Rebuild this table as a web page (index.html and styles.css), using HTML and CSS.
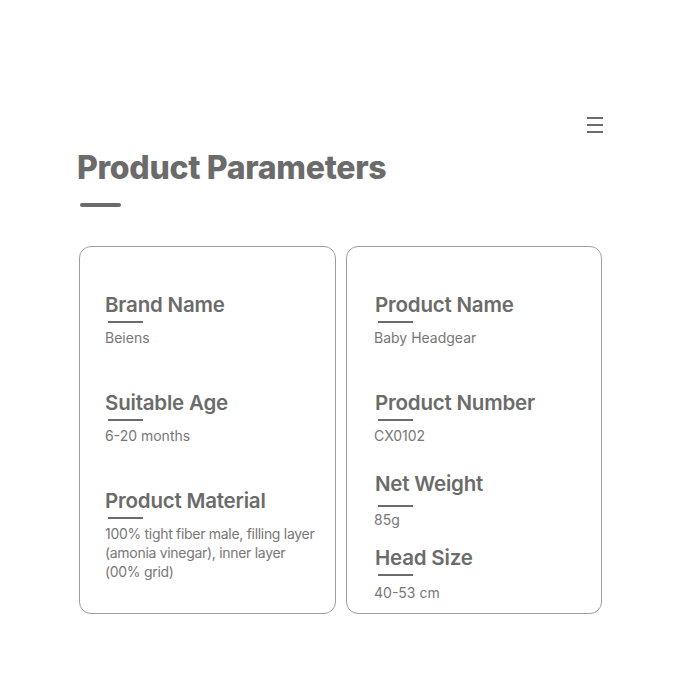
FILE: index.html
```html
<!DOCTYPE html>
<html lang="en">
<head>
  <meta charset="UTF-8">
  <meta name="viewport" content="width=device-width, initial-scale=1.0">
  <title>Product Parameters</title>
  <link rel="stylesheet" href="styles.css">
</head>
<body>
  <div class="page">
    <div class="topbar">
      <svg class="menu-icon" width="18" height="18" viewBox="0 0 18 18">
        <path d="M1 2h16M1 9h16M1 16h16" stroke="#6b6b6b" stroke-width="2" fill="none"/>
      </svg>
    </div>
    <h1 class="page-title">Product Parameters</h1>
    <div class="title-bar"></div>

    <div class="cards">
      <div class="card">
        <div class="item">
          <div class="item-title">Brand Name</div>
          <div class="item-line"></div>
          <div class="item-value">Beiens</div>
        </div>
        <div class="item">
          <div class="item-title">Suitable Age</div>
          <div class="item-line"></div>
          <div class="item-value">6-20 months</div>
        </div>
        <div class="item">
          <div class="item-title">Product Material</div>
          <div class="item-line"></div>
          <div class="item-value item-value-long">100% tight fiber male, filling layer (amonia vinegar), inner layer (00% grid)</div>
        </div>
      </div>

      <div class="card card-right">
        <div class="item">
          <div class="item-title">Product Name</div>
          <div class="item-line"></div>
          <div class="item-value">Baby Headgear</div>
        </div>
        <div class="item">
          <div class="item-title">Product Number</div>
          <div class="item-line"></div>
          <div class="item-value">CX0102</div>
        </div>
        <div class="item item-weight">
          <div class="item-title">Net Weight</div>
          <div class="item-line"></div>
          <div class="item-value">85g</div>
        </div>
        <div class="item item-size">
          <div class="item-title">Head Size</div>
          <div class="item-line"></div>
          <div class="item-value">40-53 cm</div>
        </div>
      </div>
    </div>
  </div>
</body>
</html>
```

FILE: styles.css
```css
body {
  margin: 0;
  background: #ffffff;
  font-family: Inter, 'Noto Sans', sans-serif;
  color: #6b6b6b;
}

.page {
  width: 527px;
  margin-left: 77px;
  padding-top: 116px;
}

.topbar {
  display: flex;
  justify-content: flex-end;
}

.menu-icon {
  display: block;
}

.page-title {
  margin: 15px 0 0 0;
  font-size: 32px;
  line-height: 38px;
  font-weight: 800;
  letter-spacing: -0.3px;
  color: #6b6b6b;
}

.title-bar {
  width: 41px;
  height: 4px;
  margin: 16px 0 0 3px;
  border-radius: 2px;
  background-color: #6b6b6b;
}

.cards {
  display: grid;
  grid-template-columns: 257px 256px;
  gap: 10px;
  margin: 39px 0 0 2px;
}

.card {
  box-sizing: border-box;
  height: 368px;
  padding: 45px 15px 0 25px;
  border: 1.5px solid #9d9d9d;
  border-radius: 12px;
}

.card-right {
  padding-left: 28px;
}

.item + .item {
  margin-top: 43px;
}

.item-title {
  font-size: 20.5px;
  line-height: 25px;
  font-weight: 600;
  letter-spacing: -0.2px;
  color: #6b6b6b;
}

.item-line {
  width: 35px;
  height: 2px;
  margin: 4px 0 0 3px;
  background-color: #6b6b6b;
}

.item-value {
  margin-top: 5px;
  font-size: 14px;
  line-height: 19px;
  color: #777777;
}

.item-value-long {
  letter-spacing: -0.3px;
}

.card-right .item-value {
  margin-left: -1px;
}

.card .item-weight {
  margin-top: 26px;
}

.item-weight .item-line {
  margin-top: 9px;
}

.item-weight .item-value {
  margin-top: 3px;
}

.card .item-size {
  margin-top: 16px;
}

.item-size .item-value {
  margin-top: 7px;
}
```
